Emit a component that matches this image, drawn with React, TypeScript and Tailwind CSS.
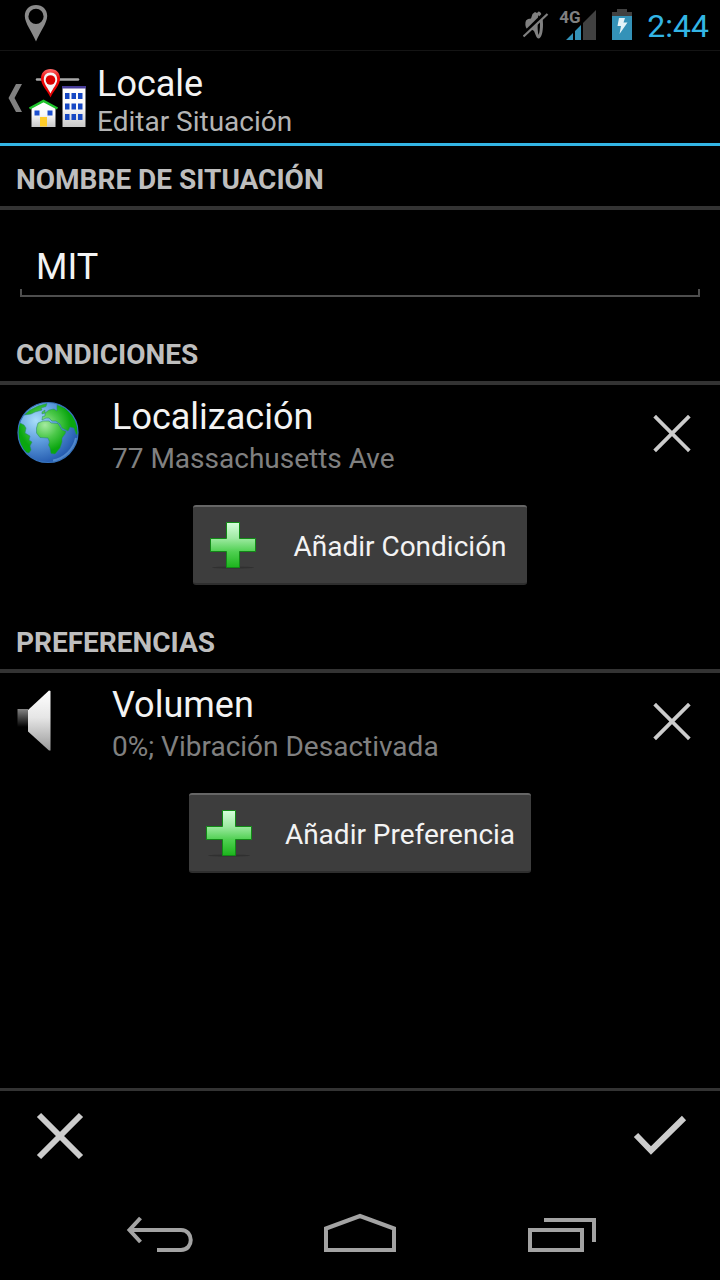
import { useState, type ReactNode } from "react";

function StatusBar() {
    return (
        <div className="w-full h-[51px] pl-6 pr-[11px] flex items-center justify-between border-b border-[#141414]">
            <svg width="24" height="38" viewBox="0 0 24 38" className="mb-1">
                <path
                    fillRule="evenodd"
                    fill="#8a8a8a"
                    d="M12 1C5.500 1 .8 5.600 .8 12c0 7 7.200 16 11.200 25.500C16 28 23.200 19 23.200 12 23.200 5.600 18.500 1 12 1Zm0 3.800a7.600 7.600 0 1 1 0 15.200 7.600 7.600 0 0 1 0-15.200Z"
                />
            </svg>

            <div className="flex items-center">
                <svg width="26" height="30" viewBox="0 0 26 30" className="mr-[10px]">
                    <path fill="#808080" d="M3 10.500 L5 9 L8 8.500 L9.500 4 L12 2 L14 3 L15.500 1.500 C18.500 1.500 20 7 20 14.500 C20 22 18.500 28.500 15.500 28.500 C13.500 28.500 12.500 24 11 21 L8 19 L4 19 C2 17 2 13 3 10.500Z" />
                    <path fill="#000" d="M15.500 5 C17.500 8 17.500 21 15.500 25 C14.300 21 14.300 9 15.500 5Z" />
                    <path d="M0 25 L23 2.500" stroke="#000" strokeWidth="4" />
                    <path d="M.500 26.500 L24.500 4" stroke="#808080" strokeWidth="2.200" />
                </svg>

                <div className="relative w-[38px] h-[32px] mr-[14px]">
                    <svg width="38" height="32" viewBox="0 0 38 32">
                        <path fill="#414141" d="M24 14 L37 1 V31 H24Z" />
                        <path fill="#3492b8" d="M7 31 L14 24 V31Z M16 22 L22 16 V31 H16Z" />
                    </svg>
                    <span className="absolute left-0 top-0 text-[17px] leading-4 font-bold text-[#808080]">4G</span>
                </div>

                <svg width="22" height="32" viewBox="0 0 22 32" className="mr-[14px]">
                    <path fill="#414141" d="M6 0 H16 V3 H21 V8 H1 V3 H6Z" />
                    <path fill="#3492b8" d="M1 7 H21 V31 H1Z" />
                    <path fill="#e4f3f8" d="M8 9 H14 L12.500 13.500 H16.500 L8.500 25 L10 17 H6.500Z" />
                </svg>

                <span className="pt-[2px] text-[32px] leading-10 text-[#33b5e5]">2:44</span>
            </div>
        </div>
    );
}

function LocaleIcon() {
    return (
        <svg width="60" height="60" viewBox="0 0 60 60">
            <defs>
                <linearGradient id="wall" x1="0" y1="0" x2="0" y2="1">
                    <stop offset="0" stopColor="#ffffff" />
                    <stop offset=".5" stopColor="#fafafa" />
                    <stop offset="1" stopColor="#c8c8c8" />
                </linearGradient>
                <linearGradient id="pin" x1="0" y1="0" x2="0" y2="1">
                    <stop offset="0" stopColor="#ff6a6a" />
                    <stop offset=".3" stopColor="#ee0c0c" />
                    <stop offset="1" stopColor="#e00000" />
                </linearGradient>
            </defs>
            <path d="M9 11.500 H50" stroke="#a9a9a9" strokeWidth="2.500" strokeLinecap="round" />
            <path fill="url(#wall)" d="M34.500 20 H57.500 V59 H34.500Z" />
            <path fill="#483d9a" d="M34 18 H58 V20.500 H34Z" />
            <g fill="#1648c4">
                <path d="M37 25 h4.500 v6 h-4.500z M43.500 25 h4.500 v6 h-4.500z M50 25 h4.500 v6 h-4.500z" />
                <path d="M37 35.500 h4.500 v6 h-4.500z M43.500 35.500 h4.500 v6 h-4.500z M50 35.500 h4.500 v6 h-4.500z" />
                <path d="M37 46 h4.500 v6 h-4.500z M43.500 46 h4.500 v6 h-4.500z M50 46 h4.500 v6 h-4.500z" />
            </g>
            <path fill="url(#wall)" d="M3.500 40 L15.500 33.500 L27.500 40 V59 H3.500Z" />
            <path d="M1.500 40.500 L15.500 33 L29.500 40.500" fill="none" stroke="#1fc42c" strokeWidth="2.500" />
            <path fill="#1d50d0" d="M6.500 42.500 h5 v5 h-5z M19.500 42.500 h5 v5 h-5z" />
            <path fill="#ffcd2a" d="M12 49 h7 v9.500 h-7z" />
            <path fill="url(#pin)" d="M22.500 1 C16.500 1 13 5 13 10.500 C13 17 19 22 22.500 29.500 C26 22 32 17 32 10.500 C32 5 28.500 1 22.500 1Z" />
            <path fill="#f4f4f4" d="M22.500 4.500 C18 4.500 15.800 7.500 15.800 11.500 C15.800 16 20 20 22.500 25.500 C25 20 29.200 16 29.200 11.500 C29.200 7.500 27 4.500 22.500 4.500Z" />
            <circle cx="22.500" cy="12" r="4.800" fill="#d80000" />
        </svg>
    );
}

function ActionBar() {
    return (
        <header className="w-full h-[95px] pt-[2px] flex items-center border-b-3 border-[#33b5e5]">
            <button type="button" aria-label="Atrás" className="pl-2 flex items-center">
                <svg width="20" height="28" viewBox="0 0 20 28">
                    <path fill="#808080" d="M8 0 H14 L6.500 14 L14 28 H8 L.500 14Z" />
                </svg>
                <LocaleIcon />
            </button>

            <div className="pl-[9px] pt-2 flex flex-col">
                <h1 className="text-[36px] leading-10 text-[#f3f3f3]">Locale</h1>
                <p className="text-[28px] leading-9 text-[#b4b4b4]">Editar Situación</p>
            </div>
        </header>
    );
}

function SectionTitle({ children }: { children: ReactNode }) {
    return (
        <h2 className="w-full h-16 px-4 pt-2 flex items-center border-b-4 border-[#333333] text-[28px] font-bold text-[#bebebe]">
            {children}
        </h2>
    );
}

function GlobeIcon() {
    return (
        <svg width="64" height="64" viewBox="0 1 64 64">
            <defs>
                <radialGradient id="sea" cx=".3" cy=".3" r=".75">
                    <stop offset="0" stopColor="#a9defa" />
                    <stop offset=".45" stopColor="#609fdf" />
                    <stop offset="1" stopColor="#2258ad" />
                </radialGradient>
                <radialGradient id="land" gradientUnits="userSpaceOnUse" cx="29" cy="25" r="26">
                    <stop offset="0" stopColor="#a5eaa0" />
                    <stop offset=".5" stopColor="#4cc84a" />
                    <stop offset="1" stopColor="#0aa60f" />
                </radialGradient>
                <clipPath id="disc">
                    <circle cx="32" cy="32.500" r="30" />
                </clipPath>
            </defs>
            <circle cx="32" cy="32.500" r="30" fill="url(#sea)" />
            <g clipPath="url(#disc)" fill="url(#land)" stroke="#25866b" strokeWidth=".5" strokeLinejoin="round">
                <path d="M22 23 L27 21 L33 21 L35 23 L42 23.500 L46 30 L50 31.500 L49 34 L46 38 L46 42 L44 48 L39 54 L35 53.500 L34 48 L32.500 45 L33.500 42 L32 38 L24 37.500 L20.500 33 L20.500 28Z" />
                <path d="M26 20 L26.500 16.500 L29 16 L29 13 L33 10 L38 9 L41 11 L41 5 L49 8 L57 15 L64 26 L63 36 L60 34 L58 28 L54 27 L52 31 L46 28 L44 24 L40 21 L36 21 L33 18 L30 18Z" />
                <path d="M8 15 L14 10 L22 6 L31 3.500 L30 6.500 L25 8 L26 10 L19 12 L15 14Z" />
                <path d="M0 26 L4 23 L8 25 L10 28 L9 33 L14 36 L13 40 L16 42 L14 46 L15 50 L13 53 L8 52 L0 40Z" />
                <path d="M26 12 L29 10 L29 13 L26 14Z" />
            </g>
            <circle cx="32" cy="32.500" r="30" fill="none" stroke="#3673bd" strokeWidth="1.200" />
            <path d="M60 38 A29 29 0 0 1 37 60.500" fill="none" stroke="#7db5ea" strokeOpacity=".5" strokeWidth="2" />
        </svg>
    );
}

function SpeakerIcon() {
    return (
        <svg width="64" height="64" viewBox="0 0 64 64">
            <defs>
                <linearGradient id="cone" x1="0" y1="0" x2="0" y2="1">
                    <stop offset="0" stopColor="#ffffff" />
                    <stop offset=".45" stopColor="#e6e6e6" />
                    <stop offset="1" stopColor="#9a9a9a" />
                </linearGradient>
                <linearGradient id="magnet" x1="0" y1="0" x2="0" y2="1">
                    <stop offset="0" stopColor="#858585" />
                    <stop offset="1" stopColor="#000000" />
                </linearGradient>
            </defs>
            <path fill="url(#magnet)" d="M1.500 20 H12 V38 H1.500Z" />
            <path fill="url(#cone)" d="M12 21 L33 1.500 L34.500 2 V61.500 L33 61.500 L12 42.500Z" />
        </svg>
    );
}

function PlusIcon() {
    return (
        <svg width="48" height="48" viewBox="0 0 48 48">
            <defs>
                <linearGradient id="plus" x1="0" y1="0" x2="0" y2="1">
                    <stop offset="0" stopColor="#d6ffdc" />
                    <stop offset=".35" stopColor="#9eeaa2" />
                    <stop offset=".65" stopColor="#4fd051" />
                    <stop offset="1" stopColor="#1cb41c" />
                </linearGradient>
            </defs>
            <ellipse cx="24" cy="46.500" rx="21" ry="1" fill="#303030" />
            <path
                d="M17.500 1.500 H30.500 V17.500 H46.500 V30.500 H30.500 V46.500 H17.500 V30.500 H1.500 V17.500 H17.500Z"
                fill="url(#plus)"
                stroke="#118a16"
            />
        </svg>
    );
}

type EntryProps = {
    icon: ReactNode;
    title: string;
    detail: string;
};

function Entry({ icon, title, detail }: EntryProps) {
    return (
        <div className="w-full h-24 pl-4 flex items-center">
            {icon}
            <div className="flex-1 min-w-0 pl-8 pt-[7px] flex flex-col">
                <h3 className="text-[36px] leading-11 text-[#f3f3f3]">{title}</h3>
                <p className="text-[28px] leading-10 text-[#808080]">{detail}</p>
            </div>
            <button type="button" aria-label={`Eliminar ${title}`} className="w-24 h-24 flex items-center justify-center">
                <svg width="40" height="40" viewBox="0 0 40 40">
                    <path d="M4 4.500 L36 36.500 M36 4.500 L4 36.500" stroke="#cccccc" strokeWidth="3.800" strokeLinecap="square" />
                </svg>
            </button>
        </div>
    );
}

function AddButton({ children }: { children: ReactNode }) {
    return (
        <div className="w-full py-6 flex justify-center">
            <button
                type="button"
                className="h-20 min-w-[334px] px-4 flex items-center gap-8 rounded-[3px] bg-[#3d3d3d] border-t-2 border-b-2 border-t-[#666666] border-b-[#2e2e2e] text-[28px] text-[#f3f3f3]"
            >
                <PlusIcon />
                <span className="flex-1 pt-1 text-center">{children}</span>
            </button>
        </div>
    );
}

function NavBar() {
    return (
        <nav className="w-full h-24 flex items-center justify-center gap-10">
            <button type="button" aria-label="Volver" className="w-40 h-24 flex items-center justify-center">
                <svg width="80" height="48" viewBox="0 0 80 48" fill="none" stroke="#a3a3a3" strokeWidth="4">
                    <path d="M20.500 10 L9.500 22 L20.500 34" />
                    <path d="M10 22 H61 C74 22 74 42 61 42 H37" />
                </svg>
            </button>
            <button type="button" aria-label="Inicio" className="w-40 h-24 flex items-center justify-center">
                <svg width="80" height="48" viewBox="0 0 80 48" fill="none" stroke="#a3a3a3" strokeWidth="4">
                    <path d="M6 42 V20.500 L40 8 L74 20.500 V42Z" />
                </svg>
            </button>
            <button type="button" aria-label="Recientes" className="w-40 h-24 flex items-center justify-center">
                <svg width="80" height="48" viewBox="0 0 80 48" fill="none" stroke="#a3a3a3" strokeWidth="4">
                    <path d="M10 22 H62 V42 H10Z" />
                    <path d="M24 12 H74 V34" />
                </svg>
            </button>
        </nav>
    );
}

export default function App() {
    const [name, setName] = useState("MIT");

    return (
        <div className="w-full min-h-screen flex flex-col bg-black font-[Roboto,sans-serif]">
            <StatusBar />
            <ActionBar />

            <main className="w-full flex-1">
                <SectionTitle>
                    <label htmlFor="name">NOMBRE DE SITUACIÓN</label>
                </SectionTitle>
                <div className="px-5 pt-[35px] pb-6">
                    <input
                        id="name"
                        type="text"
                        value={name}
                        onChange={(e) => setName(e.target.value)}
                        className="block w-full h-11 px-4 bg-transparent outline-none text-[36px] text-[#f3f3f3]"
                    />
                    <div className="w-full h-2 border-x-2 border-b-2 border-[#4e4e4e]" />
                </div>

                <SectionTitle>CONDICIONES</SectionTitle>
                <Entry icon={<GlobeIcon />} title="Localización" detail="77 Massachusetts Ave" />
                <AddButton>Añadir Condición</AddButton>

                <SectionTitle>PREFERENCIAS</SectionTitle>
                <Entry icon={<SpeakerIcon />} title="Volumen" detail="0%; Vibración Desactivada" />
                <AddButton>Añadir Preferencia</AddButton>
            </main>

            <footer className="w-full h-24 pb-[3px] flex items-center justify-between border-t-3 border-[#333333]">
                <button type="button" aria-label="Cancelar" className="w-[120px] h-full flex items-center justify-center">
                    <svg width="48" height="48" viewBox="0 0 48 48">
                        <path d="M3 3 L45 45 M45 3 L3 45" stroke="#cccccc" strokeWidth="6" />
                    </svg>
                </button>
                <button type="button" aria-label="Guardar" className="w-[120px] h-full flex items-center justify-center">
                    <svg width="56" height="48" viewBox="0 0 56 48">
                        <path d="M4 23 L19 38.500 L52 6" fill="none" stroke="#cccccc" strokeWidth="6" />
                    </svg>
                </button>
            </footer>
            <NavBar />
        </div>
    );
}
